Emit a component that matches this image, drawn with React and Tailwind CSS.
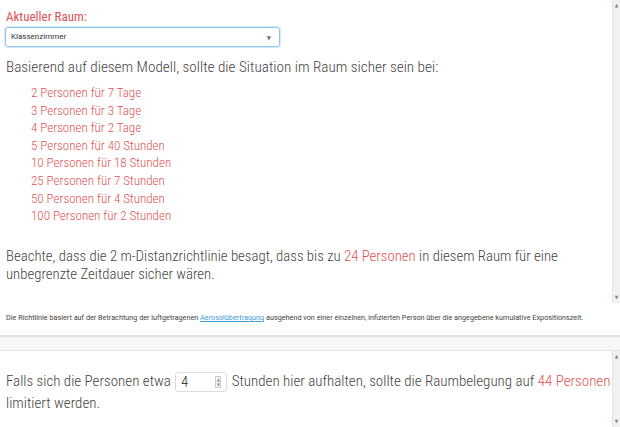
import React from "react";

const zeiten = [
  "2 Personen für 7 Tage",
  "3 Personen für 3 Tage",
  "4 Personen für 2 Tage",
  "5 Personen für 40 Stunden",
  "10 Personen für 18 Stunden",
  "25 Personen für 7 Stunden",
  "50 Personen für 4 Stunden",
  "100 Personen für 2 Stunden",
];

const Scrollbar = () => (
  <div className="w-[8px] shrink-0 bg-[#f1f1f1] border-l border-[#e4e4e4] flex flex-col justify-between items-center py-[3px]">
    <span className="text-[5px] leading-none text-[#888]">▲</span>
    <span className="text-[5px] leading-none text-[#888]">▼</span>
  </div>
);

const App = () => {
  return (
    <div className="w-[620px] h-[427px] overflow-hidden bg-white flex flex-col font-['Roboto_Condensed','Liberation_Sans_Narrow','DejaVu_Sans_Condensed',sans-serif] text-[#555]">
      {/* obere Box */}
      <div className="h-[303px] flex shrink-0">
        <div className="flex-1 pl-[6px] pt-[9px]">
          <div className="text-[13px] leading-[16px] text-[#e05252]">Aktueller Raum:</div>
          <div className="mt-[2px] w-[275px] h-[20px] ml-[-1px] rounded-[3px] border border-[#8fc3f0] shadow-[0_0_0_1px_#d5e9fb] flex items-center justify-between px-[5px]">
            <span className="text-[8px] text-[#333] font-['Roboto',sans-serif]">Klassenzimmer</span>
            <span className="text-[6px] text-[#777] pr-[3px]">▼</span>
          </div>
          <h2 className="mt-[9px] text-[15.2px] leading-[22px] font-light text-[#444]">
            Basierend auf diesem Modell, sollte die Situation im Raum sicher sein bei:
          </h2>
          <ul className="mt-[6px] pl-[25px] flex flex-col">
            {zeiten.map((z) => (
              <li key={z} className="text-[13px] leading-[17.6px] font-light text-[#e05252]">
                {z}
              </li>
            ))}
          </ul>
          <p className="mt-[22px] text-[14.8px] leading-[18px] font-light text-[#444] pr-[20px]">
            Beachte, dass die 2 m-Distanzrichtlinie besagt, dass bis zu{" "}
            <span className="text-[#e05252]">24 Personen</span> in diesem Raum für eine unbegrenzte Zeitdauer sicher wären.
          </p>
        </div>
        <Scrollbar />
      </div>

      {/* Hinweis */}
      <div className="pl-[6px] pt-[11px] h-[32px] shrink-0 text-[7.25px] leading-[8px] text-[#444] font-['Roboto',sans-serif]">
        Die Richtlinie basiert auf der Betrachtung der luftgetragenen{" "}
        <a className="text-[#3b9bd6] underline">Aerosolübertragung</a> ausgehend von einer einzelnen, infizierten Person über die angegebene kumulative Expositionszeit.
      </div>

      {/* Trenner */}
      <div className="h-[16px] shrink-0 bg-[#f7f7f7] border-t-2 border-b border-[#e2e2e2]" />

      {/* untere Box */}
      <div className="flex flex-1">
        <div className="flex-1 pl-[6px] pt-[19px]">
          <p className="text-[15px] leading-[22px] font-light text-[#444]">
            Falls sich die Personen etwa{" "}
            <span className="inline-flex align-middle items-center justify-between w-[52px] h-[20px] mx-[1px] border border-[#dcdcdc] rounded-[3px] px-[5px] bg-white">
              <span className="text-[14px] text-[#222]">4</span>
              <span className="flex flex-col w-[6px] border border-[#ccc] bg-[#f3f3f3] text-[4px] leading-[5px] text-[#888] text-center">
                <span>▲</span>
                <span>▼</span>
              </span>
            </span>{" "}
            Stunden hier aufhalten, sollte die Raumbelegung auf{" "}
            <span className="text-[#e05252]">44 Personen</span> limitiert werden.
          </p>
        </div>
        <Scrollbar />
      </div>
    </div>
  );
};

export default App;
